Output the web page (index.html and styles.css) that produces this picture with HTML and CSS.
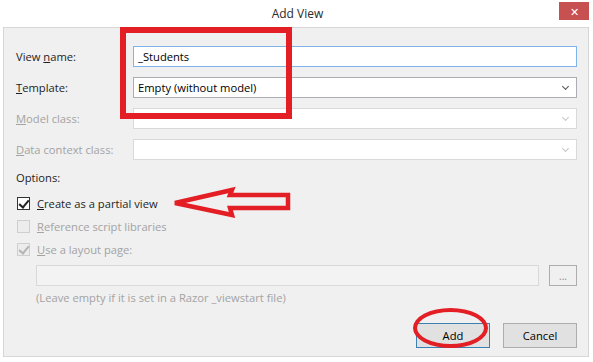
FILE: index.html
```html
<!DOCTYPE html>
<html lang="en">
<head>
    <meta charset="UTF-8">
    <title>Add View</title>
    <link rel="stylesheet" href="styles.css">
</head>
<body>

    <div class="dialog">
        <!-- Title bar -->
        <div class="titlebar">
            <span class="title">Add View</span>
            <div class="close">&#x2715;</div>
        </div>

        <div class="panel">
            <div class="field">
                <span class="label">View <u>n</u>ame:</span>
                <div class="box focus">_Students</div>
            </div>
            <div class="field">
                <span class="label"><u>T</u>emplate:</span>
                <div class="box select">Empty (without model)<span class="chev"></span></div>
            </div>
            <div class="field disabled">
                <span class="label"><u>M</u>odel class:</span>
                <div class="box select"><span class="chev"></span></div>
            </div>
            <div class="field disabled">
                <span class="label"><u>D</u>ata context class:</span>
                <div class="box select"><span class="chev"></span></div>
            </div>

            <div class="options-title">Options:</div>

            <div class="check-row">
                <span class="check checked"></span>
                <span><u>C</u>reate as a partial view</span>
            </div>
            <div class="check-row disabled">
                <span class="check"></span>
                <span><u>R</u>eference script libraries</span>
            </div>
            <div class="check-row disabled">
                <span class="check checked"></span>
                <span><u>U</u>se a layout page:</span>
            </div>

            <div class="layout-row">
                <div class="box layout-input"></div>
                <div class="browse">...</div>
            </div>
            <div class="hint">(Leave empty if it is set in a Razor _viewstart file)</div>

            <div class="buttons">
                <div class="btn default">Add</div>
                <div class="btn">Cancel</div>
            </div>

            <!-- red annotations drawn over the dialog -->
            <div class="mark-rect"></div>
            <svg class="mark-arrow" width="124" height="36" viewBox="0 0 124 36">
                <polygon points="6,18 63,5 61,10 119,10 119,23 61,23 63,30" fill="none" stroke="#e31e24" stroke-width="4.5" stroke-linejoin="miter"/>
            </svg>
            <div class="mark-ellipse"></div>
        </div>
    </div>

</body>
</html>
```

FILE: styles.css
```css
/* Basic reset */
* {
    margin: 0;
    padding: 0;
    box-sizing: border-box;
}

body {
    font-family: 'Open Sans', 'Noto Sans', sans-serif;
    font-size: 11.2px;
    color: #1e1e1e;
    background-color: white;
    width: 593px;
    height: 362px;
    overflow: hidden;
}

/* Title bar */
.titlebar {
    position: relative;
    height: 27px;
    display: flex;
    justify-content: center;
    align-items: center;
}

.title {
    font-size: 12px;
    color: #2b2b2b;
    margin-left: 2px;
}

.close {
    position: absolute;
    top: 2px;
    left: 559px;
    width: 30px;
    height: 18px;
    background-color: #c75050;
    color: white;
    font-size: 11px;
    display: flex;
    justify-content: center;
    align-items: center;
}

/* Gray dialog body */
.panel {
    position: relative;
    margin-left: 3px;
    width: 586px;
    height: 330px;
    background-color: #f0f0f0;
    border: 1px solid #d6d6d6;
    padding: 18px 11px 0 12px;
}

.field {
    display: flex;
    align-items: center;
    height: 21px;
    margin-bottom: 10px;
}

.label {
    width: 117px;
    flex-shrink: 0;
}

.disabled {
    color: #a3a3a3;
}

.box {
    position: relative;
    flex: 1;
    height: 21px;
    background-color: white;
    border: 1px solid #abadb3;
    padding-left: 4px;
    display: flex;
    align-items: center;
    color: #000;
}

.box.focus {
    border-color: #7eb4ea;
}

.disabled .box {
    border-color: #d9d9d9;
}

/* small dropdown chevron */
.chev {
    position: absolute;
    right: 8px;
    top: 6px;
    width: 5px;
    height: 5px;
    border-right: 1px solid #555;
    border-bottom: 1px solid #555;
    transform: rotate(45deg);
}

.disabled .chev {
    border-color: #c4c4c4;
}

.options-title {
    height: 16px;
    line-height: 16px;
}

.check-row {
    display: flex;
    align-items: center;
    height: 23px;
    padding-left: 1px;
}

.options-title + .check-row {
    margin-top: 6px;
}

.check {
    position: relative;
    width: 13px;
    height: 13px;
    border: 1px solid #333;
    background-color: white;
    margin-right: 7px;
}

.check.checked::after {
    content: "";
    position: absolute;
    left: 3px;
    top: 0px;
    width: 4px;
    height: 8px;
    border-right: 2px solid #222;
    border-bottom: 2px solid #222;
    transform: rotate(40deg);
}

.disabled .check {
    border-color: #cfcfcf;
    background-color: #ececec;
}

.disabled .check.checked::after {
    border-color: #b4b4b4;
}

.layout-row {
    display: flex;
    align-items: center;
    margin-top: 4px;
    padding-left: 20px;
}

.layout-input {
    flex: none;
    width: 503px;
    background-color: #f3f3f3;
    border-color: #d9d9d9;
}

.browse {
    margin-left: 10px;
    width: 28px;
    height: 21px;
    border: 1px solid #adadad;
    background-color: #f0f0f0;
    color: #888;
    font-size: 10px;
    display: flex;
    justify-content: center;
    align-items: center;
}

.hint {
    margin-top: 4px;
    padding-left: 20px;
    height: 16px;
    line-height: 16px;
    color: #a3a3a3;
}

.buttons {
    display: flex;
    justify-content: flex-end;
    gap: 13px;
    margin-top: 17px;
}

.btn {
    width: 74px;
    height: 25px;
    background-color: #e1e1e1;
    border: 1px solid #adadad;
    display: flex;
    justify-content: center;
    align-items: center;
    color: #000;
}

.btn.default {
    border-color: #3c7fb1;
}

/* Red annotations */
.mark-rect {
    position: absolute;
    left: 116px;
    top: -1px;
    width: 172px;
    height: 92px;
    border: 6px solid #e31e24;
}

.mark-arrow {
    position: absolute;
    left: 165px;
    top: 157px;
    overflow: visible;
}

.mark-ellipse {
    position: absolute;
    left: 409px;
    top: 280px;
    width: 75px;
    height: 40px;
    border: 4px solid #e31e24;
    border-radius: 50%;
}
```
